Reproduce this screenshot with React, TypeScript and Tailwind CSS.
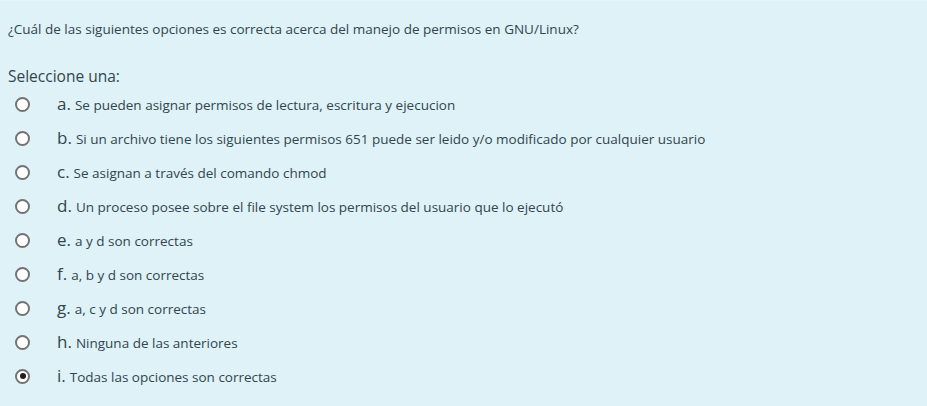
const OPTIONS = [
  { letter: 'a.', text: 'Se pueden asignar permisos de lectura, escritura y ejecucion' },
  { letter: 'b.', text: 'Si un archivo tiene los siguientes permisos 651 puede ser leido y/o modificado por cualquier usuario' },
  { letter: 'c.', text: 'Se asignan a través del comando chmod' },
  { letter: 'd.', text: 'Un proceso posee sobre el file system los permisos del usuario que lo ejecutó' },
  { letter: 'e.', text: 'a y d son correctas' },
  { letter: 'f.', text: 'a, b y d son correctas' },
  { letter: 'g.', text: 'a, c y d son correctas' },
  { letter: 'h.', text: 'Ninguna de las anteriores' },
  { letter: 'i.', text: 'Todas las opciones son correctas' },
]

function Radio({ checked }: { checked?: boolean }) {
  return (
    <span className="w-[15px] h-[15px] rounded-full border-2 border-[#737373] bg-white flex items-center justify-center">
      {checked && <span className="w-[6px] h-[6px] rounded-full bg-[#1e1e1e]" />}
    </span>
  )
}

export default function App() {
  return (
    <div className="w-[927px] h-[406px] bg-[#def2f8] border-t border-[#e8f6fa] text-[#32454d] font-['Open_Sans',sans-serif]">
      <p className="pl-2 pt-[18px] text-[13.5px] leading-[20px]">
        ¿Cuál de las siguientes opciones es correcta acerca del manejo de permisos en GNU/Linux?
      </p>
      <p className="pl-2 mt-[27px] text-[15.5px] leading-[20px]">Seleccione una:</p>
      <div className="mt-[1px] flex flex-col">
        {OPTIONS.map((o, i) => (
          <label key={o.letter} className="h-[34px] flex items-center">
            <span className="w-[57px] pl-[15px] flex items-center">
              <Radio checked={i === OPTIONS.length - 1} />
            </span>
            <span className="flex items-baseline">
              <span className="text-[17px] leading-none mr-[4px]">{o.letter}</span>
              <span className="text-[13.5px] leading-none">{o.text}</span>
            </span>
          </label>
        ))}
      </div>
    </div>
  )
}
